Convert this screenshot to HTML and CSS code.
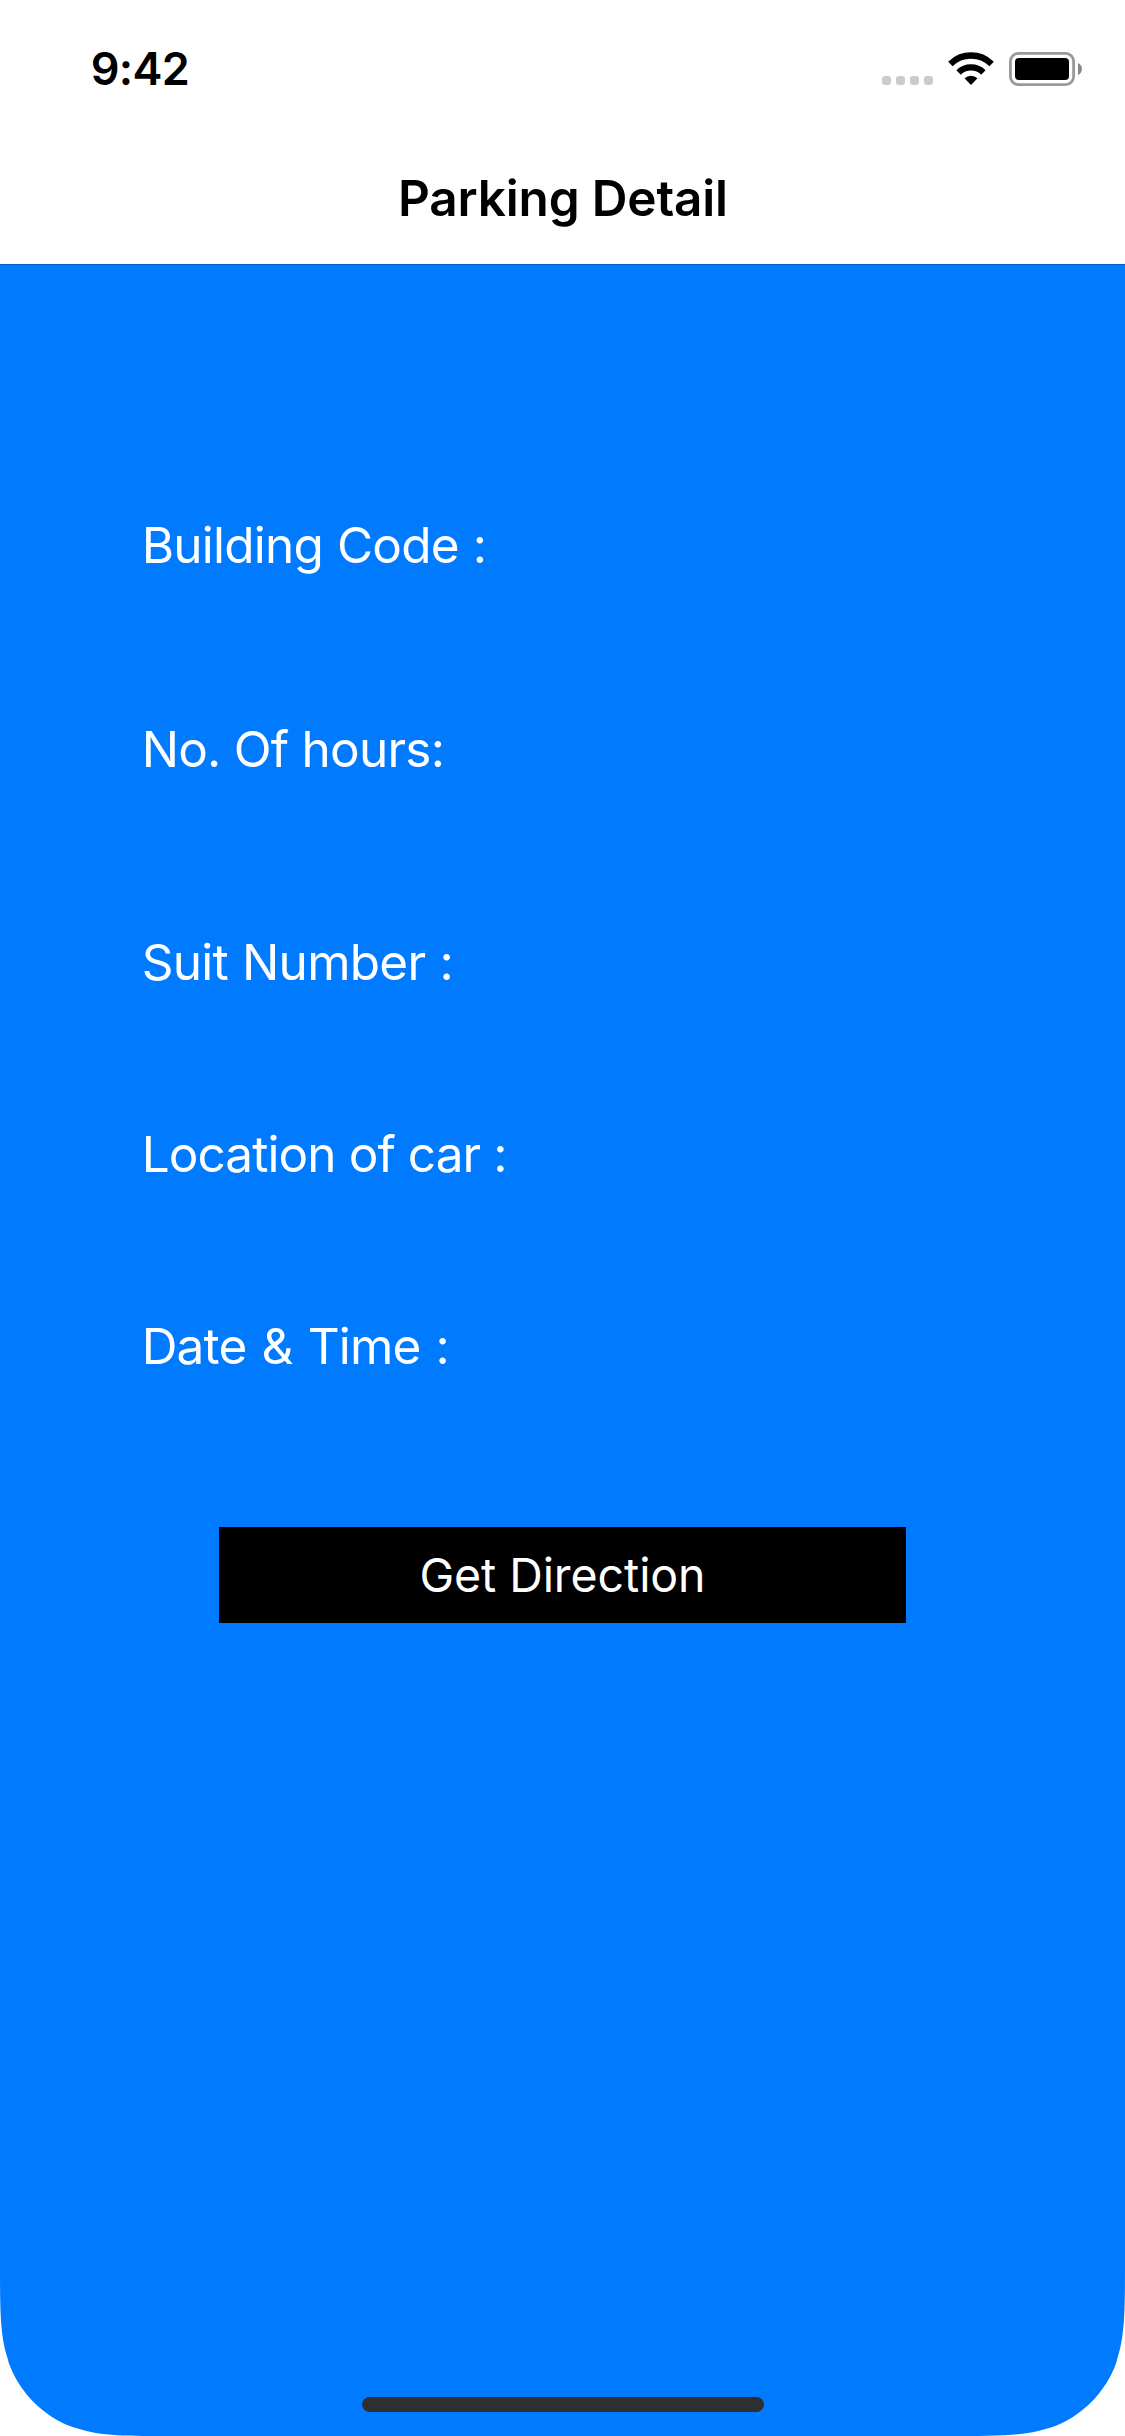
FILE: index.html
```html
<!DOCTYPE html>
<html lang="en">
<head>
<meta charset="utf-8">
<title>Parking Detail</title>
<link rel="stylesheet" href="styles.css">
</head>
<body>
<header class="header">
  <div class="status-bar">
    <time class="clock">9:42</time>
    <svg class="status-icons" width="202" height="34" viewBox="0 0 202 34" aria-hidden="true">
      <g fill="#cbcbcb">
        <rect x="0" y="24" width="9" height="9" rx="3"/>
        <rect x="14" y="24" width="9" height="9" rx="3"/>
        <rect x="28" y="24" width="9" height="9" rx="3"/>
        <rect x="42" y="24" width="9" height="9" rx="3"/>
      </g>
      <path d="M68.4 11.9A29.5 29.5 0 0 1 109.6 11.9" fill="none" stroke="#000" stroke-width="6.3"/>
      <path d="M76.6 20.4A17.7 17.7 0 0 1 101.4 20.4" fill="none" stroke="#000" stroke-width="6.3"/>
      <path d="M82.5 26.3A9.3 9.3 0 0 1 95.5 26.3L89 33Z"/>
      <rect x="128.4" y="1.4" width="63.2" height="31.2" rx="8" fill="none" stroke="#999" stroke-width="2.8"/>
      <rect x="133" y="6" width="54" height="22" rx="4"/>
      <path d="M196 11C201.3 13 201.3 21 196 23Z" fill="#888"/>
    </svg>
  </div>
  <h1 class="title">Parking Detail</h1>
</header>
<main class="screen">
  <div class="details">
    <p class="field building">Building Code :</p>
    <p class="field hours">No. Of hours:</p>
    <p class="field suit">Suit Number :</p>
    <p class="field location">Location of car :</p>
    <p class="field date">Date &amp; Time :</p>
  </div>
  <button class="direction" type="button">Get Direction</button>
  <div class="home-indicator"></div>
</main>
</body>
</html>
```
FILE: styles.css
```css
* {
  box-sizing: border-box;
}

body {
  margin: 0;
  width: 1125px;
  height: 2436px;
  display: flex;
  flex-direction: column;
  background: #fff;
  font-family: Inter, "Liberation Sans", sans-serif;
}

.header {
  height: 264px;
  padding-top: 42px;
}

.status-bar {
  height: 54px;
  display: flex;
  justify-content: space-between;
  align-items: flex-start;
  padding: 0 41px 0 90.7px;
}

.clock {
  font-size: 45px;
  font-weight: 600;
  line-height: 54px;
  letter-spacing: -0.7px;
}

.status-icons {
  margin-top: 10px;
}

.title {
  margin: 72px 0 0;
  padding-left: 398px;
  font-size: 49.5px;
  font-weight: 600;
  line-height: 60px;
  letter-spacing: -0.18px;
  white-space: nowrap;
}

.screen {
  height: 2172px;
  display: flex;
  flex-direction: column;
  padding: 250px 0 24px;
  border-top: 1px solid #0061c3;
  background: #007aff;
  color: #fff;
  /* Continuous curve on the two bottom corners */
  clip-path: path("M0 0H1125V1994.7C1125 2045.7 1125 2071.3 1117.4 2094.3L1116.3 2098.7C1105.4 2128.8 1081.8 2152.4 1051.7 2163.3L1047.3 2164.4C1024.3 2172 998.7 2172 947.7 2172H177.3C126.3 2172 100.7 2172 77.7 2164.4L73.3 2163.3C43.2 2152.4 19.6 2128.8 8.7 2098.7L7.6 2094.3C0 2071.3 0 2045.7 0 1994.7Z");
}

.details {
  padding-left: 141.7px;
}

.field {
  margin: 0;
  font-size: 49.5px;
  line-height: 60px;
  white-space: nowrap;
}

.building {
  margin-bottom: 144px;
  letter-spacing: -0.77px;
  word-spacing: 0.7px;
}

.hours {
  margin-bottom: 153px;
  letter-spacing: -0.77px;
}

.suit {
  margin-bottom: 132px;
  letter-spacing: -0.75px;
  word-spacing: 1px;
}

.location {
  margin-bottom: 132px;
  letter-spacing: -0.92px;
}

.date {
  letter-spacing: -0.83px;
  word-spacing: 2px;
}

.direction {
  width: 687px;
  height: 96px;
  margin: 151px 0 0 219px;
  padding: 0;
  border: 0;
  background: #000;
  color: #fff;
  font-family: inherit;
  font-size: 46.5px;
  line-height: 96px;
  letter-spacing: -0.09px;
}

.home-indicator {
  width: 402px;
  height: 15px;
  margin: auto 0 0 362px;
  border-radius: 8px;
  background: #2f2f2f;
}
```
